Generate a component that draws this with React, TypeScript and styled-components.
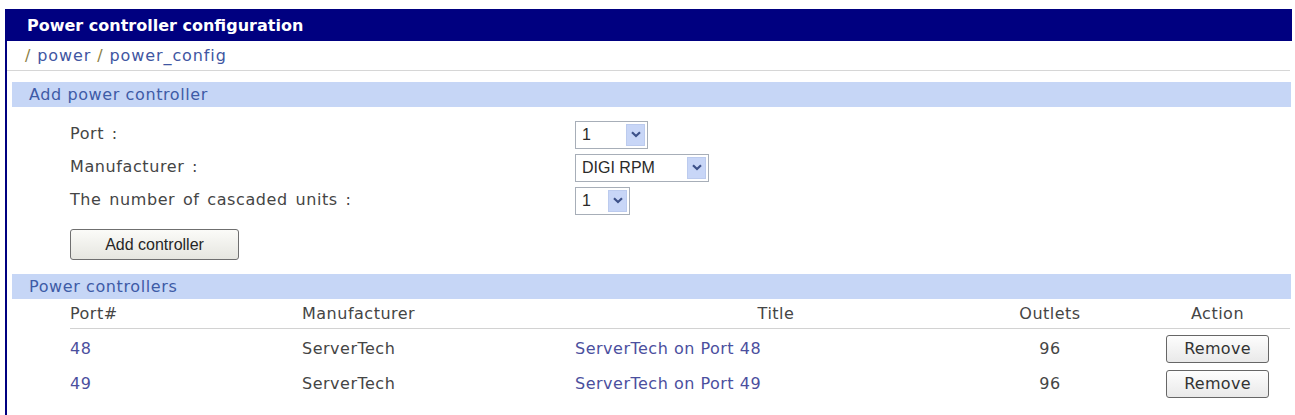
import styled, { createGlobalStyle } from "styled-components"

const GlobalStyle = createGlobalStyle`
    body {
        margin: 0;
        background: #ffffff;
        font-family: "DejaVu Sans", Verdana, sans-serif;
        font-size: 16px;
        color: #454545;
    }
`

const columns = "232px 273px 402px 146px 1fr"

const controllers = [
    { port: 48, maker: "ServerTech", outlets: 96 },
    { port: 49, maker: "ServerTech", outlets: 96 },
]

function Chevron() {
    return (
        <svg width="10" height="7" viewBox="0 0 10 7">
            <path d="M1 1.2 L5 5 L9 1.2" fill="none" stroke="#3d5189" strokeWidth="2.2" />
        </svg>
    )
}

function Dropdown({ value, width }: { value: string; width: number }) {
    return (
        <Select $width={width}>
            <SelectValue>{value}</SelectValue>
            <ArrowBox><Chevron /></ArrowBox>
        </Select>
    )
}

export default function App() {
    return (
        <Page>
            <GlobalStyle />
            <Panel>
                <TitleBar>Power controller configuration</TitleBar>
                <Breadcrumb>
                    <Slash>/</Slash><Crumb>power</Crumb><Slash>/</Slash><Crumb>power_config</Crumb>
                </Breadcrumb>

                <SectionBar>Add power controller</SectionBar>
                <Form>
                    <Label>Port :</Label>
                    <Field><Dropdown value="1" width={73} /></Field>
                    <Label>Manufacturer :</Label>
                    <Field><Dropdown value="DIGI RPM" width={134} /></Field>
                    <Label>The number of cascaded units :</Label>
                    <Field><Dropdown value="1" width={55} /></Field>
                </Form>
                <ButtonRow>
                    <AddButton>Add controller</AddButton>
                </ButtonRow>

                <SectionBar $top={14}>Power controllers</SectionBar>
                <Table>
                    <Row $head>
                        <Cell>Port#</Cell>
                        <Cell>Manufacturer</Cell>
                        <Cell $align="center">Title</Cell>
                        <Cell $align="center">Outlets</Cell>
                        <ActionCell>Action</ActionCell>
                    </Row>
                    <Body>
                        {controllers.map(c => (
                            <Row key={c.port}>
                                <Cell><Link>{c.port}</Link></Cell>
                                <Cell>{c.maker}</Cell>
                                <Cell><Link>{c.maker} on Port {c.port}</Link></Cell>
                                <Cell $align="center">{c.outlets}</Cell>
                                <ActionCell><RemoveButton>Remove</RemoveButton></ActionCell>
                            </Row>
                        ))}
                    </Body>
                </Table>
            </Panel>
        </Page>
    )
}

const Page = styled.div`
    padding: 9px 3px 0 5px;
`

const Panel = styled.div`
    border-left: 2px solid #000080;
    border-bottom: 1px solid #c9c9c9;
`

const TitleBar = styled.div`
    height: 32px;
    display: flex;
    align-items: center;
    padding-left: 20px;
    background: #000080;
    color: #ffffff;
    font-weight: bold;
    font-size: 16px;
`

const Breadcrumb = styled.div`
    height: 29px;
    display: flex;
    align-items: center;
    padding-left: 18px;
    margin-right: 2px;
    border-bottom: 1px solid #d6d6d6;
    letter-spacing: 0.9px;
`

const Slash = styled.span`
    color: #8c7f45;
    margin-right: 6px;
    &:not(:first-child) {
        margin-left: 6px;
    }
`

const Crumb = styled.span`
    color: #3f56a2;
`

const SectionBar = styled.div<{ $top?: number }>`
    margin: ${props => props.$top ?? 11}px 1px 0 5px;
    height: 25px;
    display: flex;
    align-items: center;
    padding-left: 17px;
    background: #c6d6f6;
    color: #3e5ba6;
    letter-spacing: 0.6px;
`

const Form = styled.div`
    display: grid;
    grid-template-columns: 505px auto;
    grid-auto-rows: 33px;
    padding: 11px 0 0 63px;
`

const Label = styled.div`
    display: flex;
    align-items: center;
    padding-bottom: 2px;
    letter-spacing: 0.6px;
    word-spacing: 2px;
`

const Field = styled.div`
    display: flex;
    align-items: center;
`

const Select = styled.div<{ $width: number }>`
    box-sizing: border-box;
    width: ${props => props.$width}px;
    height: 28px;
    display: flex;
    align-items: stretch;
    padding: 2px;
    border: 1px solid #a7aeb8;
    background: #ffffff;
`

const SelectValue = styled.span`
    flex: 1;
    display: flex;
    align-items: center;
    padding-left: 4px;
    font-family: "Liberation Sans", Arial, sans-serif;
    font-size: 16px;
    color: #2a2a2a;
`

const ArrowBox = styled.span`
    width: 17px;
    display: flex;
    align-items: center;
    justify-content: center;
    background: #c8d6f7;
    border: 1px solid #bccbee;
`

const ButtonRow = styled.div`
    padding: 12px 0 0 63px;
`

const AddButton = styled.button`
    width: 169px;
    height: 31px;
    border: 1px solid #6f6f6f;
    border-radius: 3px;
    background: linear-gradient(#fbfbf8, #e6e6e0);
    font-family: "Liberation Sans", Arial, sans-serif;
    font-size: 16px;
    color: #262626;
    cursor: pointer;
`

const Table = styled.div`
    margin: 0 2px 0 63px;
    padding-bottom: 14px;
    letter-spacing: 0.5px;
`

const Body = styled.div`
    padding-top: 2px;
`

const Row = styled.div<{ $head?: boolean }>`
    display: grid;
    grid-template-columns: ${columns};
    height: ${props => props.$head ? 29 : 35}px;
    border-bottom: ${props => props.$head ? "1px solid #d2d2d2" : "none"};
    align-items: center;
`

const Cell = styled.div<{ $align?: string }>`
    text-align: ${props => props.$align ?? "left"};
`

const ActionCell = styled.div`
    display: flex;
    justify-content: center;
    padding-left: 22px;
`

const Link = styled.span`
    color: #4b4f9e;
`

const RemoveButton = styled.button`
    width: 103px;
    height: 28px;
    border: 1px solid #666666;
    border-radius: 3px;
    background: linear-gradient(#fdfdfd, #e9e9e9);
    font-family: "DejaVu Sans", Verdana, sans-serif;
    font-size: 16px;
    letter-spacing: 0.3px;
    color: #333333;
    cursor: pointer;
`
